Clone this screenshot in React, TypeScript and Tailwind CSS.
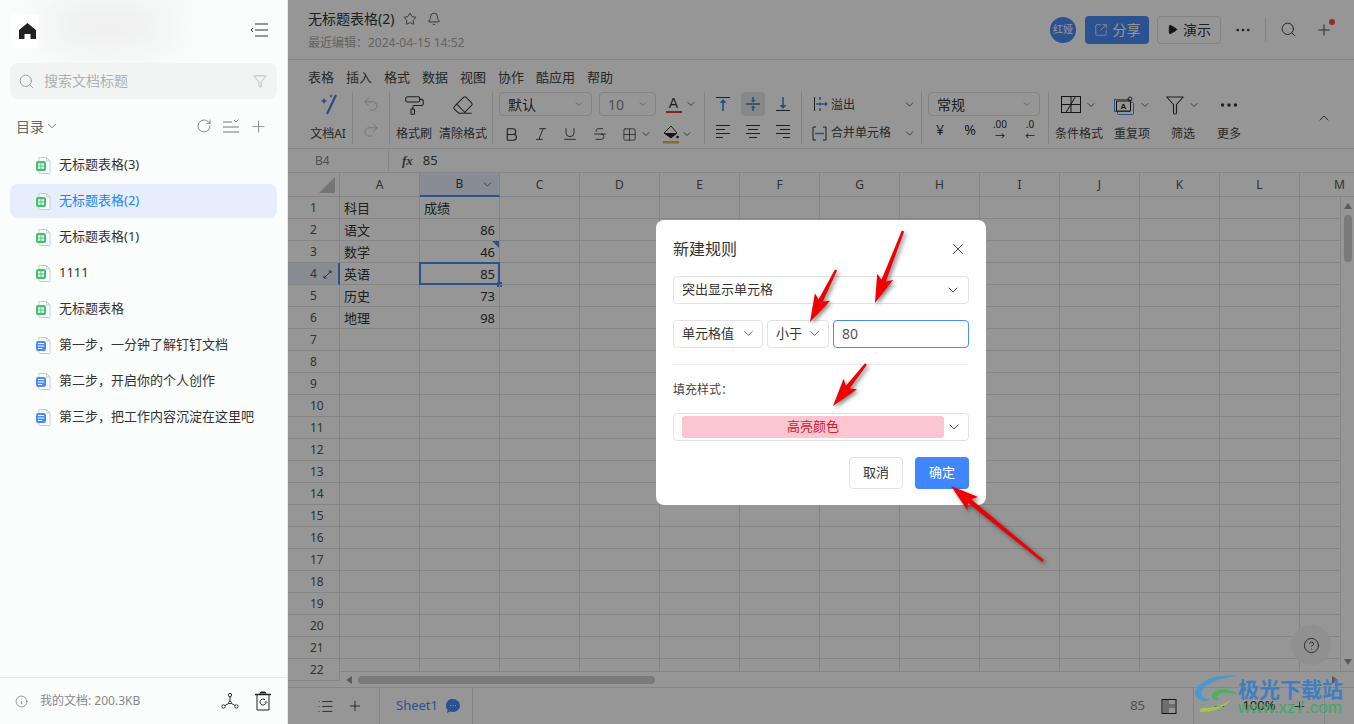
import {
  Bell, Bold, ChevronDown, ChevronUp, CircleHelp, Ellipsis, Eraser, Funnel, Grid2x2, Info, Italic, List,
  Minus, PaintRoller, Play, Plus, Redo2, RotateCw, Search, SquareArrowOutUpRight, Star,
  Strikethrough, Underline, Undo2, X,
} from 'lucide-react'
import type { ReactNode } from 'react'

const docs = [
  { name: '无标题表格(3)', kind: 'sheet' },
  { name: '无标题表格(2)', kind: 'sheet', active: true },
  { name: '无标题表格(1)', kind: 'sheet' },
  { name: '1111', kind: 'sheet' },
  { name: '无标题表格', kind: 'sheet' },
  { name: '第一步，一分钟了解钉钉文档', kind: 'doc' },
  { name: '第二步，开启你的个人创作', kind: 'doc' },
  { name: '第三步，把工作内容沉淀在这里吧', kind: 'doc' },
]

const menus = ['表格', '插入', '格式', '数据', '视图', '协作', '酷应用', '帮助']
const columns = ['A', 'B', 'C', 'D', 'E', 'F', 'G', 'H', 'I', 'J', 'K', 'L', 'M']
const rows = Array.from({ length: 22 }, (_, i) => i + 1)
const cells: Record<string, string> = {
  A1: '科目', B1: '成绩', A2: '语文', B2: '86', A3: '数学', B3: '46', A4: '英语', B4: '85',
  A5: '历史', B5: '73', A6: '地理', B6: '98',
}

// tail x, tail y, tip x, tip y
const arrows = [
  [903, 231, 875, 303],
  [836, 270, 810, 322],
  [866, 364, 833, 406],
  [1043, 561, 951, 486],
]

function arrowPoints([x1, y1, x2, y2]: number[]) {
  const len = Math.hypot(x2 - x1, y2 - y1)
  const ux = (x2 - x1) / len
  const uy = (y2 - y1) / len
  const at = (back: number, side: number) =>
    `${x2 - ux * back - uy * side},${y2 - uy * back + ux * side}`
  return [
    at(len, 1.2), at(24, 2.4), at(28, 8.5), `${x2},${y2}`, at(28, -8.5), at(24, -2.4), at(len, -1.2),
  ].join(' ')
}

function DocIcon({ kind }: { kind: string }) {
  const fill = kind === 'sheet' ? '#3cc46c' : '#4a8cf7'
  return (
    <svg width="15" height="17" viewBox="0 0 15 17" fill="none" className="shrink-0">
      <path d="M3 .5h7.5L14 4v12a.5.5 0 0 1-.5.5H3.500a.5.5 0 0 1-.5-.5V.5Z" stroke="#c5cddd" fill="#fff" />
      <path d="M10.500 .5V4H14" stroke="#c5cddd" />
      <rect x="0" y="4" width="10" height="10" rx="2" fill={fill} />
      {kind === 'sheet' ? (
        <path d="M2 6.200h2.500v2.200H2zM5.500 6.200H8v2.200H5.500zM2 9.500h2.500v2.200H2zM5.500 9.500H8v2.200H5.500z" fill="#fff" />
      ) : (
        <path d="M2 6.500h6M2 9h6M2 11.500h4" stroke="#fff" strokeWidth="1.200" />
      )}
    </svg>
  )
}

function Chev({ size = 14, className = 'text-[#333]' }: { size?: number; className?: string }) {
  return <ChevronDown size={size} strokeWidth={1.5} className={`shrink-0 ${className}`} />
}

function Divider() {
  return <div className="w-px h-[52px] bg-[#ddd] shrink-0" />
}

function ToolSelect({ label, width, tone = 'text-[#333]' }: { label: string; width: string; tone?: string }) {
  return (
    <div className={`${width} h-6 shrink-0 border border-[#ddd] rounded-[4px] flex items-center justify-between pl-2 pr-1.5 text-[14px] ${tone}`}>
      <span>{label}</span>
      <Chev size={12} className="text-[#999]" />
    </div>
  )
}

function Big({ width, icon, label, chev }: { width: string; icon: ReactNode; label: string; chev?: boolean }) {
  return (
    <div className={`${width} shrink-0 flex flex-col items-center`}>
      <div className="h-[26px] flex items-center gap-1">
        {icon}
        {chev && <Chev size={12} />}
      </div>
      <span className="mt-2 text-[12px] leading-[16px] text-[#444] whitespace-nowrap">{label}</span>
    </div>
  )
}

function AlignIcon({ align }: { align: 'left' | 'center' | 'right' }) {
  const x = align === 'left' ? [2, 2, 2, 2] : align === 'center' ? [2, 4, 2, 5] : [2, 6, 2, 9]
  const w = align === 'left' ? [14, 9, 14, 7] : align === 'center' ? [14, 10, 14, 8] : [14, 10, 14, 7]
  return (
    <svg width="18" height="16" viewBox="0 0 18 16" stroke="#333" strokeWidth="1">
      {[1.5, 5.5, 9.5, 13.5].map((y, i) => (
        <line key={y} x1={x[i]} x2={x[i] + w[i]} y1={y} y2={y} />
      ))}
    </svg>
  )
}

function VAlignIcon({ pos }: { pos: 'top' | 'mid' | 'bottom' }) {
  return (
    <svg width="16" height="16" viewBox="0 0 16 16" fill="none">
      {pos === 'top' && (
        <>
          <path d="M1 1.500h14" stroke="#333" />
          <path d="M8 15V6" stroke="#3d8ae0" strokeWidth="1.600" />
          <path d="M4.500 7 8 3l3.500 4z" fill="#3d8ae0" />
        </>
      )}
      {pos === 'mid' && (
        <>
          <path d="M1 8h14" stroke="#333" />
          <path d="M8 1v3M8 11v4" stroke="#3d8ae0" strokeWidth="1.600" />
          <path d="M5.500 4 8 6.500 10.500 4zM5.500 12 8 9.500l2.500 2.500z" fill="#3d8ae0" />
        </>
      )}
      {pos === 'bottom' && (
        <>
          <path d="M1 14.500h14" stroke="#333" />
          <path d="M8 1v9" stroke="#3d8ae0" strokeWidth="1.600" />
          <path d="M4.500 9 8 13l3.500-4z" fill="#3d8ae0" />
        </>
      )}
    </svg>
  )
}

function Sidebar() {
  return (
    <aside className="w-[288px] h-full shrink-0 bg-[#fbfcfc] border-r border-[#e8e8e8] flex flex-col">
      <div className="h-[63px] shrink-0 flex items-start pl-2.5 pr-[19px] pt-[14px] relative overflow-hidden">
        <div className="absolute left-[44px] top-[10px] w-[125px] h-[30px] rounded-full bg-[#e4e4e4] blur-xl" />
        <div className="relative w-[29px] h-[34px] bg-white rounded-l-[6px] flex items-center justify-center">
          <svg width="17" height="16" viewBox="0 0 17 16" fill="#202124" className="ml-[6px]">
            <path d="M8.500 0 17 7v9h-5.500v-5h-6v5H0V7z" />
          </svg>
        </div>
        <svg width="18" height="14" viewBox="0 0 18 14" fill="none" stroke="#333" className="relative ml-auto mt-[9px]">
          <path d="M5 1h13M5 7h13M5 13h13M3 5 1 7l2 2" />
        </svg>
      </div>
      <div className="mx-2.5 h-9 shrink-0 rounded-lg bg-[#f2f3f3] flex items-center pl-2 pr-2.5">
        <Search size={17} strokeWidth={1.3} className="text-[#999]" />
        <span className="ml-[9px] pb-[2px] text-[14px] text-[#b0b0b0]">搜索文档标题</span>
        <Funnel size={14} strokeWidth={1.3} className="ml-auto text-[#aaa]" />
      </div>
      <div className="mt-[16px] h-[22px] shrink-0 flex items-center pl-[16px] pr-[19px] text-[14px] text-[#666]">
        <span>目录</span>
        <Chev size={14} className="ml-px text-[#666]" />
        <RotateCw size={16} strokeWidth={1.3} className="ml-auto text-[#777]" />
        <svg width="17" height="15" viewBox="0 0 17 15" fill="none" stroke="#777" className="ml-[11px]">
          <path d="M0 3h9M0 8h16M0 13h16M11 1l2 2 2.500-2.500" />
        </svg>
        <Plus size={19} strokeWidth={1.4} className="ml-[9px] text-[#999]" />
      </div>
      <div className="mt-[11px] flex flex-col gap-0.5">
        {docs.map((d) => (
          <div
            key={d.name}
            className={`mx-2.5 h-[34px] rounded-lg flex items-center pl-[26px] gap-2 text-[13px] ${d.active ? 'bg-[#e7eefb] text-[#1a86ff]' : 'text-[#333]'}`}
          >
            <DocIcon kind={d.kind} />
            <span>{d.name}</span>
          </div>
        ))}
      </div>
      <div className="mt-auto h-[47px] shrink-0 border-t border-[#e8e8e8] flex items-center pl-[15px] pr-[15px] text-[12px] text-[#888]">
        <Info size={13} strokeWidth={1.2} className="text-[#666]" />
        <span className="ml-[12px]">我的文档: 200.3KB</span>
        <svg width="18" height="18" viewBox="0 0 18 18" fill="none" stroke="#333" className="ml-auto">
          <circle cx="9" cy="3" r="1.700" />
          <circle cx="2.500" cy="14.500" r="1.700" />
          <circle cx="15.500" cy="14.500" r="1.700" />
          <circle cx="9" cy="10.500" r="1.300" />
          <path d="M9 4.700v4.500M4 13.500l4-2.300M14 13.500l-4-2.300" />
        </svg>
        <svg width="18" height="20" viewBox="0 0 18 20" fill="none" stroke="#222" className="ml-[15px]">
          <path d="M1 3.500h16" strokeWidth="1.500" />
          <path d="M6 2.500 7 1h4l1 1.500" fill="#222" />
          <path d="M3 4v15h12V4" />
          <path d="M12 11a3 3 0 1 1-1-2.200M11 11.500l1-1 1 1" />
        </svg>
      </div>
    </aside>
  )
}

function TopBar() {
  return (
    <div className="h-[60px] shrink-0 border-b border-[#e6e6e6] flex pl-5 pr-[21px] items-center">
      <div className="flex flex-col">
        <div className="flex items-center text-[14px] leading-5 text-[#333]">
          <span>无标题表格(2)</span>
          <Star size={14} strokeWidth={1.3} className="ml-[9px]" />
          <Bell size={14} strokeWidth={1.3} className="ml-[10px]" />
        </div>
        <span className="mt-[6px] text-[12px] leading-4 text-[#aaa]">最近编辑：2024-04-15 14:52</span>
      </div>
      <div className="ml-auto w-[26px] h-[26px] rounded-full bg-[#4a8af5] text-white text-[10px] flex items-center justify-center">红娅</div>
      <div className="ml-[9px] w-16 h-7 rounded-[4px] bg-[#4a8af5] text-white text-[14px] flex items-center justify-center gap-[5px]">
        <SquareArrowOutUpRight size={14} strokeWidth={1.3} />
        <span>分享</span>
      </div>
      <div className="ml-2 w-16 h-7 rounded-[4px] border border-[#ddd] text-[#333] text-[14px] flex items-center justify-center gap-[5px]">
        <Play size={11} fill="#222" className="text-[#222]" />
        <span>演示</span>
      </div>
      <Ellipsis size={18} strokeWidth={1.600} className="ml-[13px] text-[#333]" />
      <div className="ml-[13px] w-px h-6 bg-[#e0e0e0]" />
      <Search size={17} strokeWidth={1.300} className="ml-[14px] text-[#333]" />
      <div className="ml-[18px] relative">
        <Plus size={18} strokeWidth={1.300} className="text-[#444]" />
        <div className="absolute -right-[2px] -top-[2px] w-[6px] h-[6px] rounded-full bg-[#f05050]" />
      </div>
    </div>
  )
}

function Ribbon() {
  return (
    <div className="h-[89px] shrink-0 border-b border-[#e6e6e6] pl-5">
      <div className="flex gap-3 pt-[8px] h-[32px] text-[13px] leading-[18px] text-[#444]">
        {menus.map((m) => <span key={m}>{m}</span>)}
      </div>
      <div className="flex items-start">
        <Big
          width="w-[40px] mr-[4px]"
          label="文档AI"
          icon={
            <svg width="20" height="22" viewBox="0 0 20 22" fill="none">
              <path d="M18 1 9 20" stroke="#3f7ff0" strokeWidth="2.200" />
              <path d="M6 4 7 6l2 1-2 1-1 2-1-2-2-1 2-1zM13 0l.6 1.400L15 2l-1.400.6L13 4l-.6-1.400L11 2l1.400-.6z" fill="#3f7ff0" />
            </svg>
          }
        />
        <Divider />
        <div className="w-[36px] shrink-0 flex flex-col items-center gap-2 pt-[3px] text-[#bbb]">
          <Undo2 size={18} strokeWidth={1.100} />
          <Redo2 size={18} strokeWidth={1.100} />
        </div>
        <Divider />
        <div className="w-[102px] shrink-0 flex pl-[6px] gap-[7px]">
          <Big width="w-[36px]" label="格式刷" icon={<PaintRoller size={21} strokeWidth={1.200} className="text-[#333]" />} />
          <Big width="w-[48px]" label="清除格式" icon={<Eraser size={22} strokeWidth={1.100} className="text-[#333]" />} />
        </div>
        <Divider />
        <div className="w-[211px] shrink-0 pl-[6px] flex flex-col">
          <div className="flex items-center gap-[7px] h-6">
            <ToolSelect label="默认" width="w-[93px]" />
            <ToolSelect label="10" width="w-[57px]" tone="text-[#888]" />
            <div className="ml-[2px] flex flex-col items-center w-[17px]">
              <span className="text-[14px] leading-[16px] text-[#333] font-['Liberation_Sans',sans-serif]">A</span>
              <div className="w-4 h-[2px] bg-[#e23c3c]" />
            </div>
            <Chev size={12} className="-ml-1 text-[#333]" />
          </div>
          <div className="mt-[6px] h-[24px] flex items-center text-[#333] pl-[4px]">
            <Bold size={17} strokeWidth={1.500} />
            <Italic size={16} strokeWidth={1.300} className="ml-[13px]" />
            <Underline size={16} strokeWidth={1.300} className="ml-[13px]" />
            <Strikethrough size={16} strokeWidth={1.300} className="ml-[14px]" />
            <Grid2x2 size={15} strokeWidth={1.200} className="ml-[14px]" />
            <Chev size={12} className="ml-[3px]" />
            <svg width="18" height="20" viewBox="0 0 18 20" fill="none" className="ml-[10px]">
              <path d="M2 9 9 2l6 7-6 5z" stroke="#333" />
              <path d="M2 9h13l-6 5z" fill="#222" />
              <circle cx="15.500" cy="13" r="1.300" fill="#222" />
              <rect x="1" y="17" width="16" height="2.500" fill="#e8b63c" />
            </svg>
            <Chev size={12} className="ml-[1px]" />
          </div>
        </div>
        <Divider />
        <div className="w-[96px] shrink-0 grid grid-cols-[30px_30px_30px] pl-[3px] justify-start">
          {(['top', 'mid', 'bottom'] as const).map((p) => (
            <div key={p} className="h-6 flex items-center justify-center">
              <div className={`w-6 h-6 rounded flex items-center justify-center ${p === 'mid' ? 'bg-[#e4e6ea]' : ''}`}>
                <VAlignIcon pos={p} />
              </div>
            </div>
          ))}
          {(['left', 'center', 'right'] as const).map((a) => (
            <div key={a} className="h-[28px] mt-[2px] flex items-center justify-center">
              <AlignIcon align={a} />
            </div>
          ))}
        </div>
        <Divider />
        <div className="w-[119px] shrink-0 pl-[11px] pr-[5px] text-[12px] text-[#444] flex flex-col">
          <div className="h-6 flex items-center">
            <svg width="16" height="14" viewBox="0 0 16 14" fill="none">
              <path d="M1.500 0v14M7 0v3M7 5.500v3M7 11v3" stroke="#333" />
              <path d="M3 7h11" stroke="#3d8ae0" strokeWidth="1.400" />
              <path d="m12 4.500 3 2.500-3 2.500z" fill="#3d8ae0" />
            </svg>
            <span className="ml-[2px] pt-px">溢出</span>
            <Chev size={13} className="ml-auto text-[#444]" />
          </div>
          <div className="mt-[4px] h-[26px] flex items-center">
            <svg width="15" height="15" viewBox="0 0 15 15" fill="none" className="-ml-[1px]">
              <path d="M4 1H1v13h3M11 1h3v13h-3" stroke="#333" />
              <path d="M3 7.500h9" stroke="#3d8ae0" strokeWidth="1.500" />
            </svg>
            <span className="ml-[4px]">合并单元格</span>
            <Chev size={13} className="ml-auto text-[#444]" />
          </div>
        </div>
        <Divider />
        <div className="w-[126px] shrink-0 pl-[6px] flex flex-col">
          <ToolSelect label="常规" width="w-[112px]" />
          <div className="mt-[2px] -ml-[3px] h-[24px] w-[120px] grid grid-cols-4 items-center text-center text-[#333] text-[13px] leading-[12px]">
            <span className="text-[14px]">¥</span>
            <span className="text-[14px]">%</span>
            <span className="text-[10px]">.00<br />→</span>
            <span className="text-[10px]">.0<br />←</span>
          </div>
        </div>
        <Divider />
        <Big
          width="w-[60px]"
          label="条件格式"
          chev
          icon={
            <svg width="20" height="18" viewBox="0 0 20 18" fill="none" stroke="#222">
              <rect x=".5" y=".5" width="19" height="16" />
              <path d="M.5 8.500h19M10 .5v16M14.500 .5 5 16.500" />
            </svg>
          }
        />
        <Big
          width="w-[46px]"
          label="重复项"
          chev
          icon={
            <svg width="21" height="19" viewBox="0 0 21 19" fill="none">
              <rect x=".5" y="3.500" width="15" height="12" stroke="#4a8af5" />
              <rect x="3.500" y="6.500" width="16" height="12" rx="1" stroke="#4a8af5" />
              <rect x="2.500" y="5" width="14" height="10" fill="#fff" stroke="#222" />
              <text x="9.500" y="13" fontSize="8" textAnchor="middle" fill="#222" fontWeight="700" fontFamily="Liberation Sans, sans-serif">A</text>
              <circle cx="16" cy="3" r="2" stroke="#333" />
            </svg>
          }
        />
        <Big
          width="w-[56px]"
          label="筛选"
          chev
          icon={
            <svg width="18" height="19" viewBox="0 0 18 19" fill="none" stroke="#333" strokeWidth="1.100">
              <path d="M.8 1h16.400l-6.700 7.500v8.500c0 1.400-3 1.400-3 0V8.500z" strokeLinejoin="round" />
            </svg>
          }
        />
        <Big
          width="w-[36px]"
          label="更多"
          icon={<Ellipsis size={22} strokeWidth={1.800} className="text-[#333]" />}
        />
        <ChevronUp size={16} strokeWidth={1.300} className="ml-[69px] mt-[18px] text-[#333]" />
      </div>
    </div>
  )
}

function Cell({ col, row }: { col: string; row: number }) {
  const key = `${col}${row}`
  const value = cells[key]
  const numeric = value !== undefined && /^\d+$/.test(value)
  return (
    <div className={`relative h-[22px] border-r border-b border-[#e2e2e2] px-1 text-[13px] leading-[23px] text-[#333] whitespace-nowrap ${numeric ? 'text-right' : ''}`}>
      {value}
      {key === 'B3' && (
        <div className="absolute right-0 top-0 w-0 h-0 border-t-[7px] border-l-[7px] border-t-[#4a8af5] border-l-transparent" />
      )}
      {key === 'B4' && (
        <>
          <div className="absolute -left-px -top-px -right-px -bottom-px border-2 border-[#4a8af5]" />
          <div className="absolute -right-[3px] -bottom-[3px] w-[5px] h-[5px] bg-[#4a8af5]" />
        </>
      )}
    </div>
  )
}

function Sheet() {
  return (
    <div className="flex-1 min-h-0 relative overflow-hidden">
      <div className="grid grid-cols-[52px_repeat(12,80px)_80px] w-[1092px]">
        <div className="h-[24px] border-r border-b border-[#e2e2e2] relative">
          <div className="absolute right-[4px] top-[4px] w-0 h-0 border-b-[16px] border-l-[16px] border-b-[#c8c8c8] border-l-transparent" />
        </div>
        {columns.map((c) => (
          <div
            key={c}
            className={`relative h-[24px] flex items-center justify-center text-[12px] border-r border-[#e2e2e2] ${c === 'B' ? 'bg-[#e8eefc] border-b-2 border-b-[#4a8af5] text-[#444]' : 'border-b text-[#555]'}`}
          >
            {c}
            {c === 'B' && <Chev size={13} className="absolute right-[5px] text-[#555]" />}
          </div>
        ))}
        {rows.map((r) => (
          <div key={r} className="contents">
            <div className={`relative h-[22px] flex items-center pl-[22px] pt-px text-[12px] text-[#555] border-b border-[#e2e2e2] ${r === 4 ? 'bg-[#e8eefc] border-r-2 border-r-[#4a8af5]' : 'border-r'}`}>
              {r}
              {r === 4 && (
                <svg width="9" height="9" viewBox="0 0 9 9" fill="none" stroke="#555" className="absolute right-[6px]">
                  <path d="M1 8l7-7M5.500 1H8v2.500M1 5.500V8h2.500" />
                </svg>
              )}
            </div>
            {columns.map((c) => <Cell key={c} col={c} row={r} />)}
          </div>
        ))}
      </div>
      {/* scrollbars sit over the cells */}
      <div className="absolute left-[52px] right-0 bottom-0 h-4 bg-white flex items-center border-t border-[#e2e2e2] pl-1.5">
        <div className="w-0 h-0 border-y-[4px] border-r-[6px] border-y-transparent border-r-[#999]" />
        <div className="ml-1.5 w-[297px] h-2 rounded bg-[#cfcfcf]" />
        <div className="ml-auto mr-4 w-0 h-0 border-y-[4px] border-l-[6px] border-y-transparent border-l-[#999]" />
      </div>
      <div className="absolute right-0 top-[24px] bottom-4 w-[14px] bg-white border-l border-[#e2e2e2] flex flex-col items-center pt-1.5">
        <div className="w-0 h-0 border-x-[4px] border-b-[6px] border-x-transparent border-b-[#999]" />
        <div className="mt-1.5 w-2 h-[47px] rounded bg-[#cfcfcf]" />
        <div className="mt-auto mb-1.5 w-0 h-0 border-x-[4px] border-t-[6px] border-x-transparent border-t-[#999]" />
      </div>
      <div className="absolute right-[23px] bottom-[22px] w-10 h-10 rounded-full bg-[#f5f5f5] flex items-center justify-center">
        <CircleHelp size={17} strokeWidth={1.200} className="text-[#333]" />
      </div>
    </div>
  )
}

function BottomBar() {
  return (
    <div className="h-[37px] shrink-0 border-t border-[#e2e2e2] flex items-center text-[#333]">
      <div className="w-[92px] h-full flex items-center pl-[29px] gap-[13px] border-r border-[#e2e2e2]">
        <List size={17} strokeWidth={1.200} />
        <Plus size={16} strokeWidth={1.300} />
      </div>
      <div className="w-[93px] h-full flex items-center pl-4 border-r border-[#e2e2e2] text-[13px] text-[#4a8af5]">
        <span>Sheet1</span>
        <svg width="14" height="14" viewBox="0 0 14 14" className="ml-2">
          <path d="M7 0a7 6.500 0 0 1 0 13c-1 0-2-.2-3-.5L1 14l.6-3.300A6.500 6.500 0 0 1 7 0Z" fill="#4a8af5" />
          <path d="M4 6.500h1M6.500 6.500h1M9 6.500h1" stroke="#fff" />
        </svg>
      </div>
      <span className="ml-auto text-[13px] text-[#888]">85</span>
      <svg width="16" height="15" viewBox="0 0 16 15" fill="none" className="ml-[16px]">
        <rect x="1" y=".5" width="14" height="14" stroke="#222" />
        <rect x="2" y="1" width="6" height="13" fill="#bbb" />
        <rect x="2" y="5" width="12" height="4" fill="#bbb" />
      </svg>
      <div className="ml-[16px] w-px h-full bg-[#e2e2e2]" />
      <Minus size={15} strokeWidth={1.300} className="ml-[18px]" />
      <span className="ml-[10px] w-[44px] text-center text-[13px]">100%</span>
      <Plus size={15} strokeWidth={1.300} className="ml-[11px]" />
      <div className="ml-[17px] w-px h-full bg-[#e2e2e2]" />
      <div className="w-[29px]" />
    </div>
  )
}

function Dialog() {
  return (
    <div className="w-[330px] h-[285px] bg-white rounded-lg px-[17px] flex flex-col">
      <div className="h-[56px] shrink-0 flex items-center justify-between pt-[2px]">
        <span className="text-[16px] text-[#333]">新建规则</span>
        <X size={18} strokeWidth={1.200} className="text-[#333] mr-[2px]" />
      </div>
      <div className="h-7 shrink-0 border border-[#e2e2e2] rounded-[4px] flex items-center justify-between pl-2 pr-[7px] text-[13px] text-[#333]">
        <span>突出显示单元格</span>
        <Chev size={16} className="text-[#555]" />
      </div>
      <div className="mt-[16px] h-7 shrink-0 flex gap-1 text-[13px] text-[#333]">
        <div className="w-[90px] border border-[#e2e2e2] rounded-[4px] flex items-center justify-between pl-2 pr-[6px]">
          <span>单元格值</span>
          <Chev size={15} className="text-[#555]" />
        </div>
        <div className="w-[62px] border border-[#e2e2e2] rounded-[4px] flex items-center justify-between pl-2 pr-[6px]">
          <span>小于</span>
          <Chev size={15} className="text-[#555]" />
        </div>
        <div className="flex-1 border border-[#4a8af5] rounded-[4px] flex items-center pl-2 text-[#555] text-[14px]">80</div>
      </div>
      <div className="mt-[16px] h-px shrink-0 bg-[#eee]" />
      <div className="mt-[17px] h-4 shrink-0 text-[12px] leading-4 text-[#444]">填充样式：</div>
      <div className="mt-[15px] h-7 shrink-0 border border-[#e2e2e2] rounded-[4px] flex items-center pl-2 pr-[6px]">
        <div className="w-[262px] h-[22px] rounded-[3px] bg-[#fbc6cf] text-[#c8202e] text-[13px] flex items-center justify-center">高亮颜色</div>
        <Chev size={16} className="ml-auto text-[#555]" />
      </div>
      <div className="mt-4 flex justify-end gap-3 text-[13px]">
        <div className="w-[54px] h-8 border border-[#e2e2e2] rounded-[4px] flex items-center justify-center text-[#333]">取消</div>
        <div className="w-[54px] h-8 rounded-[4px] bg-[#3f86ff] flex items-center justify-center text-white">确定</div>
      </div>
    </div>
  )
}

function Watermark() {
  return (
    <div className="absolute left-[1195px] top-[674px] flex">
      <svg width="44" height="40" viewBox="0 0 44 40" className="opacity-85">
        <path d="M42 2C26 0 8 4 1 15c-3 6 1 11 8 12 3 0 5-1 6-2-6 0-10-3-8-8C10 10 24 4 42 2Z" fill="#3d9ad6" />
        <path d="M43 21c-5-6-17-8-24-3-4 3-3 7 1 8 2 .5 4 0 5-1-3 0-4-2-2-4 5-3 13-3 20 0Z" fill="#42b35a" />
        <path d="M5 38c12 0 26-4 31-13-6 6-18 9-27 9-3 0-5 2-4 4Z" fill="#a7cf3c" />
      </svg>
      <div className="ml-[-1px] flex flex-col">
        <span className="text-[21px] leading-[28px] font-bold text-[#3d7fc4] font-['Noto_Sans_CJK_SC',sans-serif] whitespace-nowrap">极光下载站</span>
        <span className="text-[17px] leading-[20px] -mt-[4px] text-[#3fa868] font-['Liberation_Sans',sans-serif] whitespace-nowrap">www.xz7.com</span>
      </div>
    </div>
  )
}

export default function App() {
  return (
    <div className="w-[1354px] h-[724px] relative overflow-hidden flex bg-white font-['Noto_Sans','Noto_Sans_CJK_SC',sans-serif]">
      <Sidebar />
      <main className="flex-1 min-w-0 h-full relative flex flex-col">
        <TopBar />
        <Ribbon />
        <div className="h-[24px] shrink-0 border-b border-[#e6e6e6] flex items-center text-[13px] text-[#666]">
          <div className="w-[101px] h-full border-r border-[#e6e6e6] pl-[27px] flex items-center text-[#888] text-[12px]">B4</div>
          <span className="ml-[13px] italic font-['Liberation_Serif',serif] font-bold text-[#555]">fx</span>
          <span className="ml-[10px] text-[#444]">85</span>
        </div>
        <Sheet />
        <BottomBar />
        <div className="absolute inset-0 bg-black/[0.41] flex items-center justify-center">
          <Dialog />
        </div>
      </main>
      <svg width="1354" height="724" className="absolute inset-0 pointer-events-none drop-shadow-[2px_2px_2px_rgba(0,0,0,0.5)]">
        {arrows.map((a) => (
          <polygon key={a[0]} points={arrowPoints(a)} fill="#f00000" />
        ))}
      </svg>
      <Watermark />
    </div>
  )
}
